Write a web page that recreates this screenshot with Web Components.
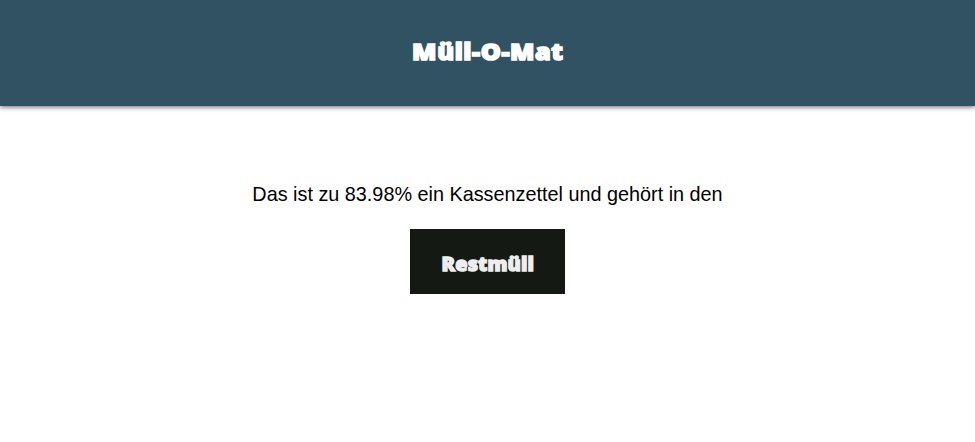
<!DOCTYPE html>
<html lang="de"><head><meta charset="utf-8"><title>Müll-O-Mat</title>
<style>html,body{margin:0;height:100%;background:#fff;overflow:hidden;font-family:"Liberation Sans",Arial,sans-serif;color:#000}</style></head>
<body>
<muell-app></muell-app>
<script>
customElements.define('app-header', class extends HTMLElement {
  constructor(){super();this.attachShadow({mode:'open'}).innerHTML=`<style>
:host{display:flex;justify-content:center;box-sizing:border-box;height:106px;padding-top:36px;background:#315262;box-shadow:0 1px 5px rgba(0,0,0,.6)}
h1{margin:0;font:900 23px/30px "Noto Sans",sans-serif;color:#fff;-webkit-text-stroke:1.5px #fff;white-space:nowrap;letter-spacing:.5px;transform:scaleX(1.1)}
</style><h1><slot></slot></h1>`;}
});
customElements.define('waste-badge', class extends HTMLElement {
  constructor(){super();this.attachShadow({mode:'open'}).innerHTML=`<style>
:host{display:flex;justify-content:center;box-sizing:border-box;width:155px;height:65px;padding-top:23px;background:#141914}
span{font:900 18.5px/24px "Noto Sans",sans-serif;color:#eee;-webkit-text-stroke:1.3px #eee;white-space:nowrap;letter-spacing:.1px;transform:scaleX(1.08)}
</style><span><slot></slot></span>`;}
});
customElements.define('muell-app', class extends HTMLElement {
  constructor(){super();this.attachShadow({mode:'open'}).innerHTML=`<style>
:host{display:block}
main{display:flex;flex-direction:column;align-items:center;padding-top:76px}
p{margin:0 0 23px;font-size:19.82px;line-height:24px;white-space:nowrap}
</style><app-header>Müll-O-Mat</app-header><main><p>Das ist zu 83.98% ein Kassenzettel und gehört in den</p><waste-badge>Restmüll</waste-badge></main>`;}
});
</script></body></html>
